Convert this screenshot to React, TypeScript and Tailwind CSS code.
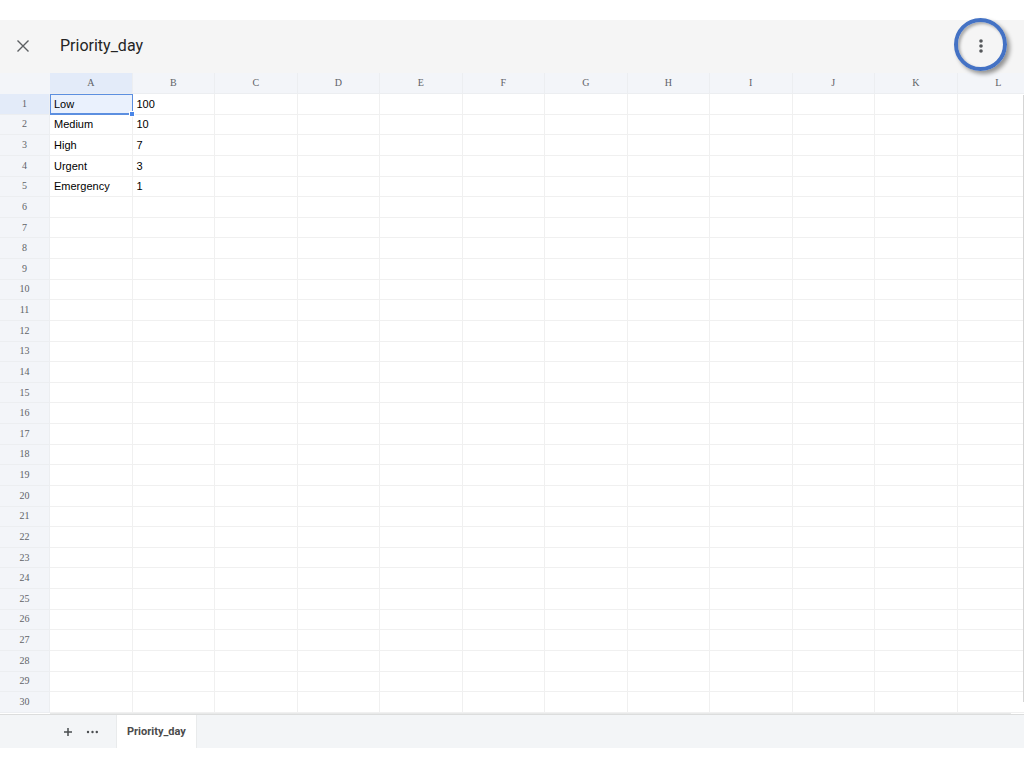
import { useState } from 'react';

const COLUMNS = ['A', 'B', 'C', 'D', 'E', 'F', 'G', 'H', 'I', 'J', 'K', 'L'];
const ROW_COUNT = 30;

const DATA: string[][] = [
  ['Low', '100'],
  ['Medium', '10'],
  ['High', '7'],
  ['Urgent', '3'],
  ['Emergency', '1'],
];

interface Cell {
  row: number;
  col: number;
}

function Header({ title }: { title: string }) {
  return (
    <header className="flex h-[53px] shrink-0 items-center bg-[#f5f5f5] pb-px pl-[11px] pr-[31px]">
      <button type="button" aria-label="Close" className="flex size-6 items-center justify-center">
        <svg viewBox="0 0 12 12" className="size-3" fill="none" stroke="#5c5f62" strokeWidth="1.4">
          <path d="M.5.5l11 11M11.5.5l-11 11" />
        </svg>
      </button>
      <h1 className="ml-[25px] flex-1 font-[Roboto,sans-serif] text-[16px] leading-6 text-[#242424]">
        {title}
      </h1>
      <button
        type="button"
        aria-label="More options"
        className="relative flex size-6 items-center justify-center"
      >
        <svg viewBox="0 0 4 14" className="h-3.5 w-1" fill="#55585b">
          <circle cx="2" cy="2" r="1.8" />
          <circle cx="2" cy="7" r="1.8" />
          <circle cx="2" cy="12" r="1.8" />
        </svg>
        {/* Highlight ring */}
        <span className="pointer-events-none absolute -left-[15px] -top-4 z-20 size-[53px] rounded-full border-4 border-[#4472c4] shadow-[3px_3px_4px_rgba(0,0,0,0.4),inset_2px_2px_3px_rgba(0,0,0,0.3)]" />
      </button>
    </header>
  );
}

interface SheetProps {
  selected: Cell;
  onSelect: (cell: Cell) => void;
}

function Sheet({ selected, onSelect }: SheetProps) {
  return (
    <div className="relative min-h-0 flex-1 overflow-hidden bg-white">
      <table className="h-[640px] w-[1040px] table-fixed border-separate border-spacing-0">
        <colgroup>
          <col className="w-[50px]" />
          {COLUMNS.map((name) => (
            <col key={name} />
          ))}
        </colgroup>
        <thead className="font-['Liberation_Serif',serif] text-[10px] leading-4 text-[#5f6368]">
          <tr className="h-[21px]">
            <td className="bg-[#f3f5f9] p-0" />
            {COLUMNS.map((name, col) => (
              <th
                key={name}
                scope="col"
                className={`border-b border-r border-[#eceef1] p-0 text-center font-normal ${
                  col === selected.col ? 'bg-[#e3ebf9]' : 'bg-[#f3f5f9]'
                }`}
              >
                {name}
              </th>
            ))}
          </tr>
        </thead>
        <tbody className="font-['Liberation_Sans',sans-serif] text-[11px] leading-4 text-black">
          {Array.from({ length: ROW_COUNT }, (_, row) => (
            <tr key={row}>
              <th
                scope="row"
                className={`border-b border-r border-[#eceef1] p-0 text-center font-['Liberation_Serif',serif] text-[10px] font-normal text-[#5f6368] ${
                  row === selected.row ? 'bg-[#e3ebf9]' : 'bg-[#f3f5f9]'
                }`}
              >
                {row + 1}
              </th>
              {COLUMNS.map((name, col) => {
                const isSelected = row === selected.row && col === selected.col;
                return (
                  <td
                    key={name}
                    onClick={() => onSelect({ row, col })}
                    className={`relative border-b border-r border-[#f0f0f0] py-0 pl-1 pr-0 ${
                      isSelected ? 'z-10 bg-[#eaf1fd]' : ''
                    }`}
                  >
                    {DATA[row]?.[col]}
                    {isSelected && (
                      <span className="pointer-events-none absolute -bottom-px -right-px left-0 top-0 border border-b-2 border-[#5c8fe0]">
                        <span className="absolute -bottom-[3px] -right-[2px] size-1 bg-[#4a86e8] ring-1 ring-white" />
                      </span>
                    )}
                  </td>
                );
              })}
            </tr>
          ))}
        </tbody>
      </table>

      {/* Scrollbar edges */}
      <div className="absolute bottom-3 right-0 top-[22px] w-px bg-[#d5d5d5]" />
      <div className="absolute bottom-0 left-[50px] right-[13px] h-px bg-[#e8e9e9]" />
    </div>
  );
}

function TabBar({ name }: { name: string }) {
  return (
    <footer className="flex h-[34px] shrink-0 items-stretch border-t border-[#dcdddd] bg-[#f3f5f7] pl-14">
      <button type="button" aria-label="Add sheet" className="flex w-6 items-center justify-center">
        <svg viewBox="0 0 8 8" className="size-2" stroke="#4a4d50" strokeWidth="1.5">
          <path d="M4 0v8M0 4h8" />
        </svg>
      </button>
      <button type="button" aria-label="All sheets" className="flex w-6 items-center justify-center">
        <svg viewBox="0 0 12 4" className="h-1 w-3" fill="#4a4d50">
          <circle cx="2" cy="2" r="1.2" />
          <circle cx="6.5" cy="2" r="1.2" />
          <circle cx="10.8" cy="2" r="1.2" />
        </svg>
      </button>
      <button
        type="button"
        className="ml-3 border-x border-[#e9ebec] bg-white px-2.5 font-[Roboto,sans-serif] text-[11px] font-bold leading-4 text-[#4b4b4b]"
      >
        {name}
      </button>
    </footer>
  );
}

export default function App() {
  const [selected, setSelected] = useState<Cell>({ row: 0, col: 0 });

  return (
    <main className="flex h-screen flex-col overflow-hidden bg-white py-5">
      <Header title="Priority_day" />
      <Sheet selected={selected} onSelect={setSelected} />
      <TabBar name="Priority_day" />
    </main>
  );
}
